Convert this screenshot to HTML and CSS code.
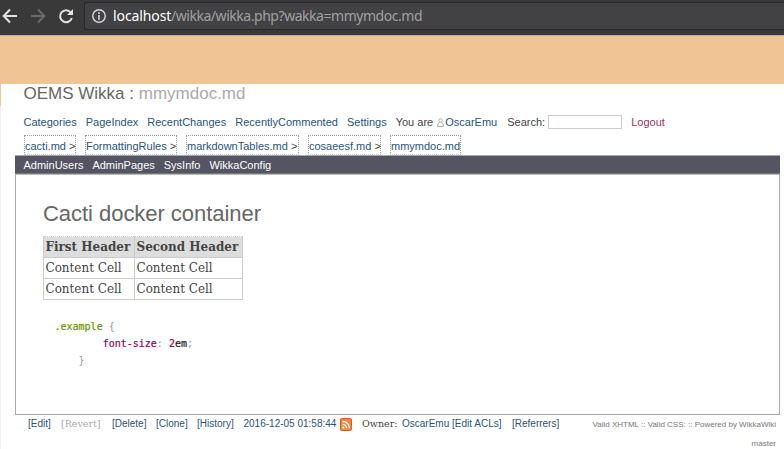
FILE: index.html
```html
<!DOCTYPE html>
<html lang="en">
<head>
<meta charset="utf-8">
<title>OEMS Wikka : mmymdoc.md</title>
<link rel="stylesheet" href="styles.css">
</head>
<body>
<div class="browser">
  <svg class="tools" width="84" height="35" viewBox="0 0 84 35" fill="none" stroke-width="2">
    <path d="M17 16H4M10 9.5L3.7 16L10 22.500" stroke="#e2e2e2"/>
    <path d="M31 16H44M38 9.500L44.300 16L38 22.500" stroke="#6b6b6d"/>
    <path d="M70.700 12.300A6 6 0 1 0 71.800 18" stroke="#e2e2e2"/>
    <path d="M73 9V15H67Z" fill="#e2e2e2"/>
  </svg>
  <div class="address">
    <svg class="info" width="14" height="14" viewBox="0 0 14 14"><circle cx="7" cy="7" r="6.200" fill="none" stroke="#d8d8d8" stroke-width="1.400"/><path d="M6.200 3.300h1.600v1.600H6.200zM6.200 6h1.600v4.800H6.200z" fill="#d8d8d8"/></svg>
    <span class="host">localhost</span><span class="path">/wikka/wikka.php?wakka=mmymdoc.md</span>
  </div>
</div>
<div class="band"></div>
<div class="page">
  <h1 class="title">OEMS Wikka : <span>mmymdoc.md</span></h1>
  <nav class="menu">
    <a>Categories</a><a>PageIndex</a><a>RecentChanges</a><a>RecentlyCommented</a><a>Settings</a>
    <span class="you">You are</span>
    <svg class="user" width="7" height="9" viewBox="0 0 7 9" fill="none" stroke="#aaa"><circle cx="3.500" cy="2.500" r="1.700"/><path d="M2.500 4.500Q.6 5 .6 8.400H6.400Q6.400 5 4.500 4.500"/></svg>
    <a class="me">OscarEmu</a>
    <label>Search:</label><input type="text">
    <a class="logout">Logout</a>
  </nav>
  <nav class="trail">
    <span class="t1"><a>cacti.md</a> &gt;</span><span class="t2"><a>FormattingRules</a> &gt;</span><span class="t3"><a>markdownTables.md</a> &gt;</span><span class="t4"><a>cosaeesf.md</a> &gt;</span><span class="t5"><a>mmymdoc.md</a></span>
  </nav>
  <nav class="admin"><a>AdminUsers</a><a>AdminPages</a><a>SysInfo</a><a>WikkaConfig</a></nav>
  <main class="content">
    <h2>Cacti docker container</h2>
    <table>
      <tr><th>First Header</th><th>Second Header</th></tr>
      <tr><td>Content Cell</td><td>Content Cell</td></tr>
      <tr><td>Content Cell</td><td>Content Cell</td></tr>
    </table>
<pre><b class="sel">.example</b> {
        <b class="prop">font-size</b>: <b class="num">2</b><b class="unit">em</b>;
    }</pre>
  </main>
  <footer>
    <a class="f1">[Edit]</a><span class="f2 serif off">[Revert]</span><a class="f3">[Delete]</a><a class="f4">[Clone]</a><a class="f5">[History]</a><a class="f6">2016-12-05 01:58:44</a>
    <svg class="feed" width="12" height="13" viewBox="0 0 12 13"><rect width="12" height="13" rx="2" fill="#d95a1a"/><rect x="1" y="1" width="10" height="11" rx="1" fill="#f08a43"/><g fill="none" stroke="#fff" stroke-width="1.300"><path d="M2.500 6.300a4 4 0 0 1 4 4M2.500 3.300a7 7 0 0 1 7 7"/></g><circle cx="3.300" cy="9.500" r="1" fill="#fff"/></svg>
    <span class="f7 serif">Owner:</span><a class="f8">OscarEmu</a><a class="f9">[Edit ACLs]</a><a class="f10">[Referrers]</a>
    <p class="credits">Valid XHTML :: Valid CSS: :: Powered by WikkaWiki<br>master</p>
  </footer>
</div>
</body>
</html>
```
FILE: styles.css
```css
* { box-sizing: border-box; }
body { margin: 0; width: 784px; height: 449px; overflow: hidden; background: #fff; color: #444; font: 11px/14px "Liberation Sans", sans-serif; }
svg { display: block; flex: none; }
a { color: #28557a; }
.browser { display: flex; height: 35px; background: #39393a; }
.address { display: flex; align-items: center; flex: 1; height: 28px; margin-top: 2px; padding-left: 7px; border: 1px solid #272728; border-right: 0; border-radius: 3px 0 0 3px; background: #424244; font: 14px/26px "Noto Sans", sans-serif; white-space: nowrap; }
.info { margin-right: 7px; }
.host { width: 58px; color: #fff; letter-spacing: -.1px; }
.path { color: #a0a0a0; letter-spacing: -.46px; }
.band { height: 49px; border-top: 1px solid #b5aea6; background: #f1c496; }
.page { height: 365px; border-left: 1px solid #f0f0f0; border-image: linear-gradient(#f1c496 23px, #f0f0f0 23px) 1; padding-left: 14px; }
.title { margin: 0; padding-left: 8.500px; height: 31px; font-size: 17px; font-weight: normal; line-height: 19px; color: #666; white-space: nowrap; }
.title span { color: #aaa; }
.menu { display: flex; height: 14px; padding-left: 8.500px; white-space: nowrap; }
.menu a { margin-right: 9px; }
.menu .you { margin-right: 4px; }
.menu .me { margin-right: 10px; }
.user { margin: 3px 1px 0 0; }
.menu label { width: 41px; }
.menu input { width: 74px; height: 14px; margin: 0 9px 0 0; padding: 0; border: 1px solid #ccc; background: #fff; }
.menu .logout { color: #993366; }
.trail { display: flex; gap: 9px; height: 20px; margin-top: 6px; padding-left: 9px; }
.trail span { height: 20px; border: 1px dotted #999; border-bottom-color: #ccc; line-height: 20px; white-space: nowrap; }
.t1 { width: 52px; }
.t2 { width: 92px; }
.t3 { width: 113px; }
.t4 { width: 73px; }
.t5 { width: 71px; }
.admin { display: flex; gap: 9px; width: 765px; height: 19px; padding-left: 8.500px; border-top: 1px solid #aaa; border-bottom: 1px solid #777; background: #555463; line-height: 18px; }
.admin a { color: #fff; }
.content { width: 765px; height: 241px; padding: 26px 0 0 27px; border: 1px solid #aaa; border-top-color: #bbb; }
h2 { margin: 0; height: 35px; font-size: 22px; line-height: 25px; font-weight: normal; color: #666; white-space: nowrap; letter-spacing: -.04px; }
table { width: 200px; border-collapse: collapse; table-layout: fixed; font: 13.300px/17px "DejaVu Serif Condensed", "DejaVu Serif", serif; font-stretch: condensed; color: #444; }
th, td { height: 21px; padding: 0 2px 2px; border: 1px solid #ccc; text-align: left; white-space: nowrap; }
td { padding-left: 1.500px; }
th { padding: 0 1.500px 2px; background: #ddd; border-top-style: dotted; }
th:first-child { width: 91px; }
pre { margin: 18px 0 0 11.500px; font: 10px/15px "DejaVu Sans Mono", monospace; color: #999; transform: scaleY(1.130); transform-origin: 0 0; }
pre b { font-weight: normal; -webkit-text-stroke: .2px currentColor; }
.sel { color: #690; }
.prop { color: #905; }
.num { color: #905; }
.unit { color: #222; }
footer { display: flex; height: 33px; padding: 2px 8px 0 13px; font-size: 10px; white-space: nowrap; }
.serif { font: 9.500px/14px "DejaVu Serif", serif; }
.off { color: #aaa; }
.f1 { width: 33px; }
.f2 { width: 51px; }
.f3 { width: 44px; }
.f4 { width: 41px; }
.f5 { width: 46.500px; }
.f6 { width: 96.500px; }
.feed { margin: 1px 10px 0 0; }
.f7 { width: 40px; }
.f8 { width: 50px; }
.f9 { width: 60px; }
.credits { margin: -2px 0 0 auto; font-size: 8px; line-height: 19px; color: #777; text-align: right; }
```
